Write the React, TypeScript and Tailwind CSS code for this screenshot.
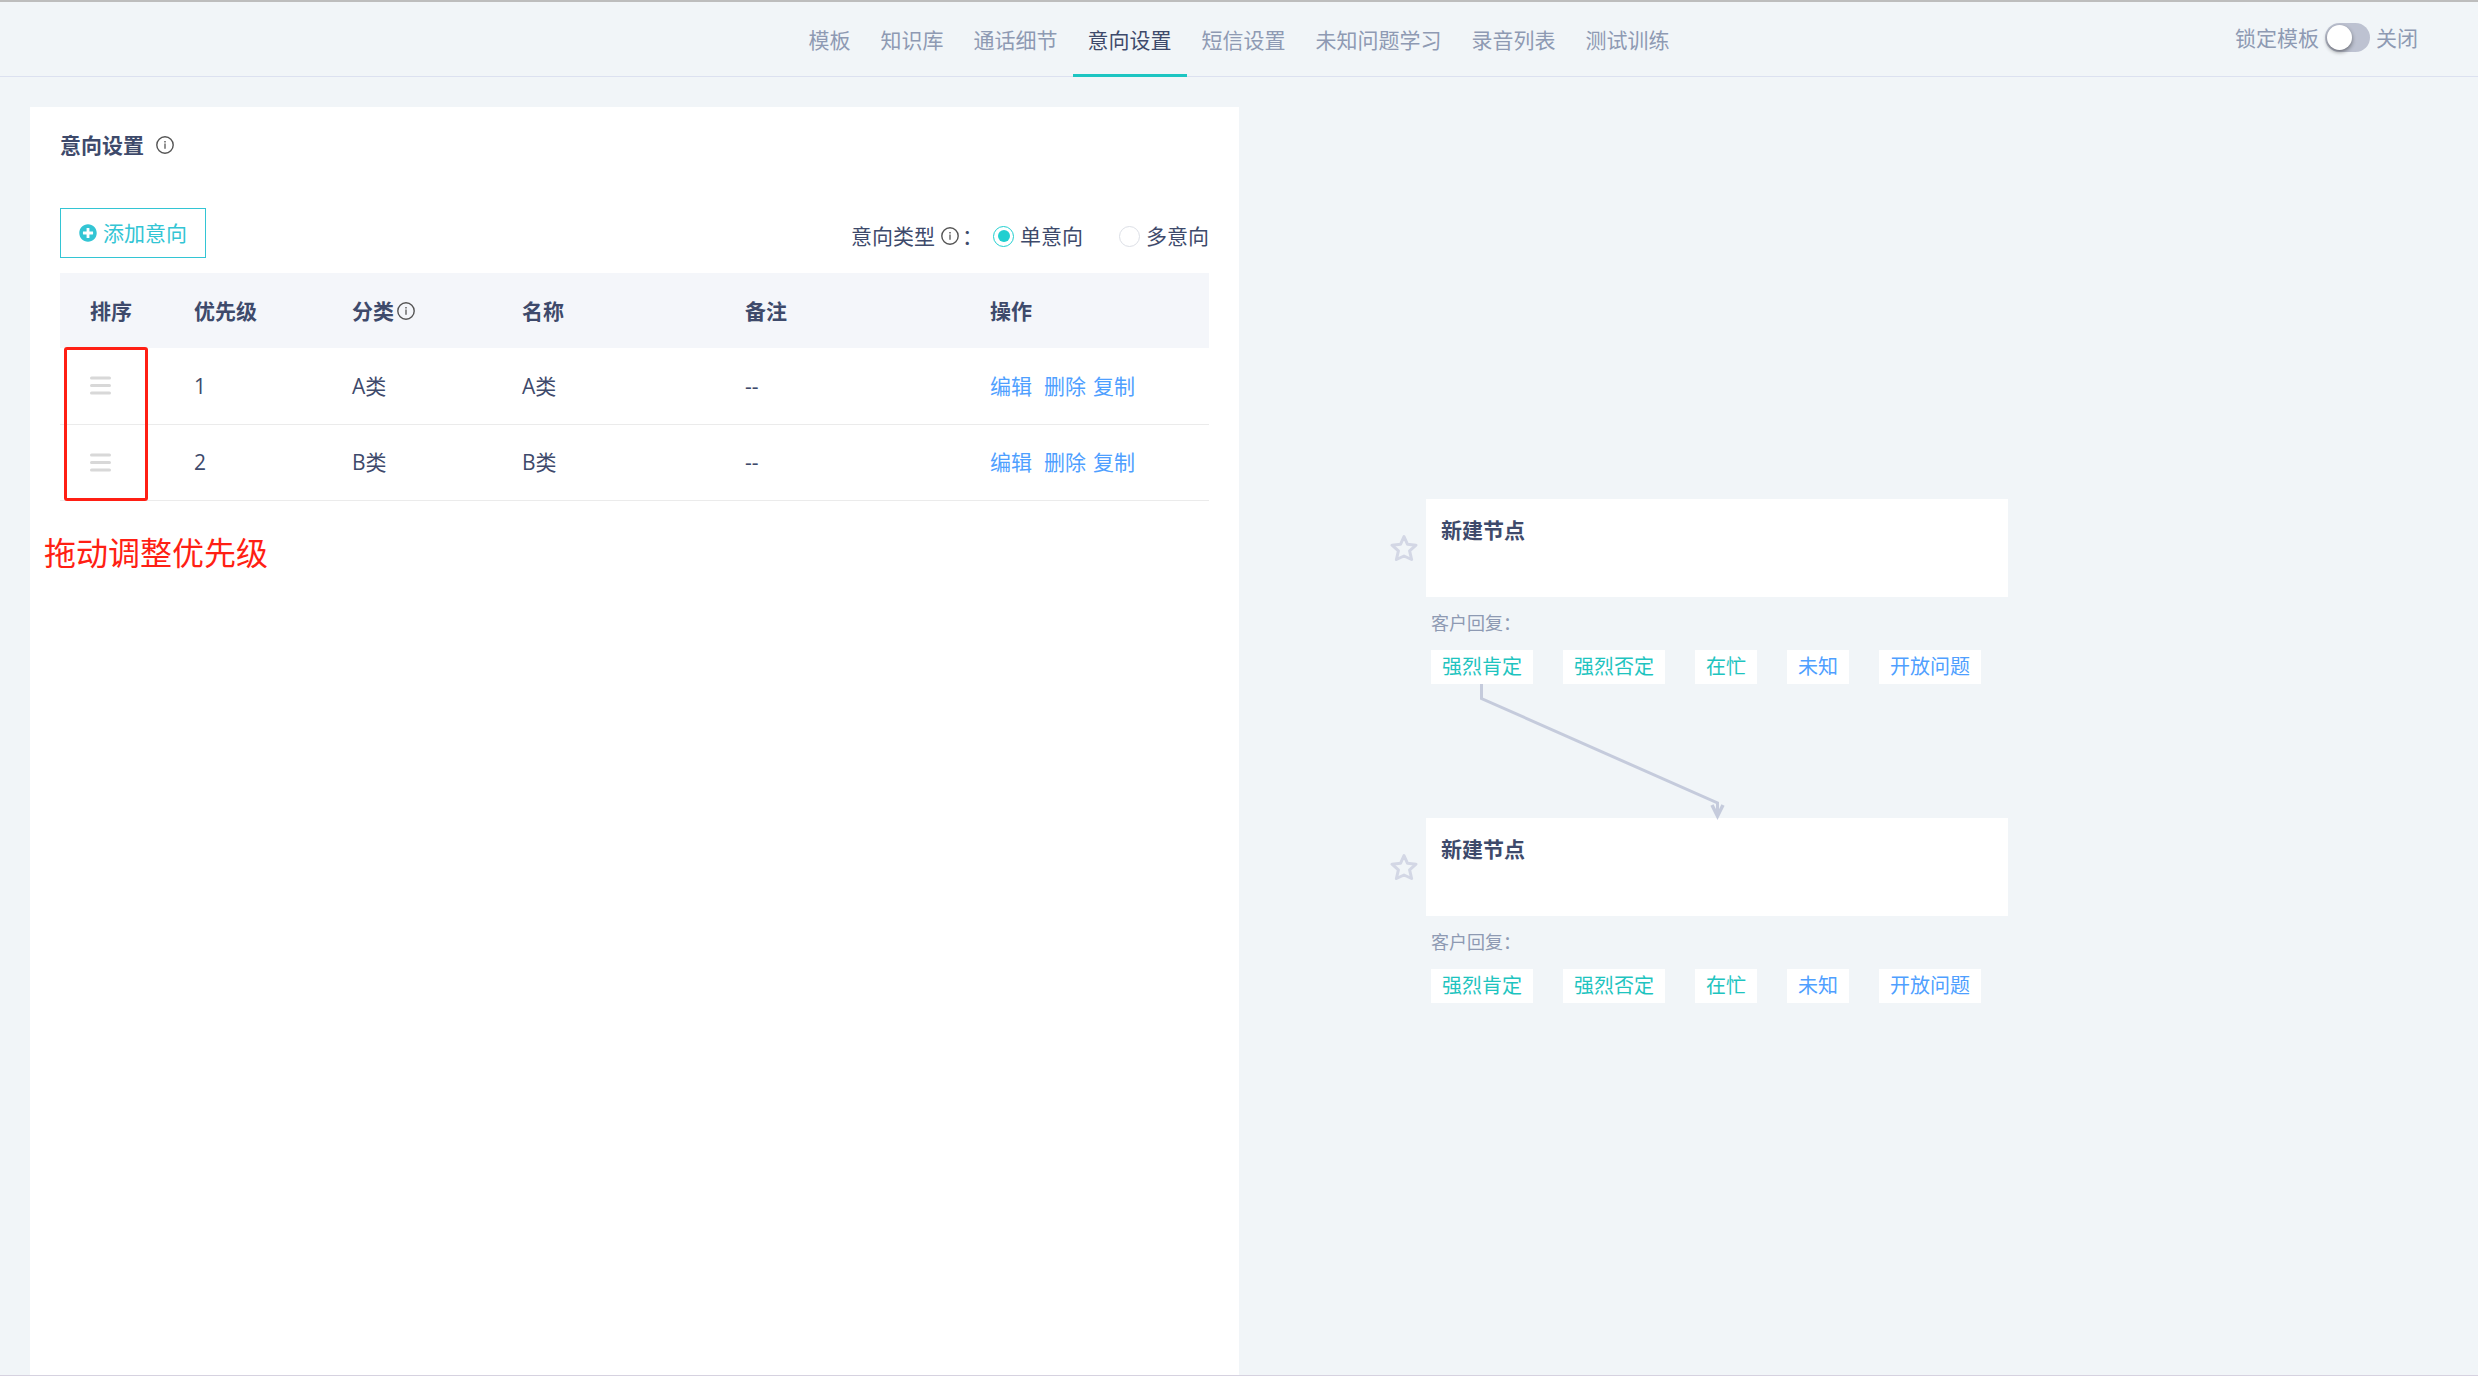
import { useState } from "react"
import { FaPlusCircle } from "react-icons/fa"

const tabs = ["模板", "知识库", "通话细节", "意向设置", "短信设置", "未知问题学习", "录音列表", "测试训练"]

const intents = [
  { priority: 1, category: "A类", name: "A类", remark: "--" },
  { priority: 2, category: "B类", name: "B类", remark: "--" },
]

const replies = [
  { label: "强烈肯定", color: "text-[#1ec4bf]" },
  { label: "强烈否定", color: "text-[#1ec4bf]" },
  { label: "在忙", color: "text-[#1ec4bf]" },
  { label: "未知", color: "text-[#4f9fff]" },
  { label: "开放问题", color: "text-[#4f9fff]" },
]

function InfoIcon() {
  return (
    <svg className="size-[18px] shrink-0" viewBox="0 0 18 18" fill="none" stroke="#555" aria-hidden="true">
      <circle cx="9" cy="9" r="8.2" strokeWidth="1.4" />
      <path d="M9 7.6v5.2" strokeWidth="1.3" />
      <path d="M9 5v1.4" strokeWidth="1.4" />
    </svg>
  )
}

function DragIcon() {
  return (
    <svg className="h-[21px] w-[21px]" viewBox="0 0 21 21" stroke="#d8d8d8" strokeWidth="3" strokeLinecap="round" aria-hidden="true">
      <path d="M1.5 3h18M1.5 10.5h18M1.5 18h18" />
    </svg>
  )
}

function StarIcon() {
  return (
    <svg className="size-7 shrink-0" viewBox="0 0 28 28" fill="none" stroke="#d3d7e5" strokeWidth="3" strokeLinejoin="round" aria-hidden="true">
      <path d="M14 2.500l3.500 7.800 8.500.9-6.400 5.700 2 8.600-7.600-3.500-7.600 3.500 2-8.600L2 11.200l8.500-.9z" />
    </svg>
  )
}

function Header() {
  const [active, setActive] = useState("意向设置")
  const [locked, setLocked] = useState(false)

  return (
    <header className="grid grid-cols-[1fr_auto_1fr] border-t-2 border-b border-t-[#bdbdbd] border-b-[#dce1f0]">
      <nav className="col-start-2 -mb-px flex">
        {tabs.map((tab) => (
          <button
            key={tab}
            onClick={() => setActive(tab)}
            className={
              tab === active
                ? "h-[75px] border-b-3 border-[#1cc5c2] px-[15px] pt-[3px] text-[#3e4a6b]"
                : "h-[75px] border-b-3 border-transparent px-[15px] pt-[3px] text-[#8e9ab3]"
            }
          >
            {tab}
          </button>
        ))}
      </nav>
      <label className="flex h-[74px] items-center justify-end gap-1.5 pr-[60px] pb-[3px] text-[#8e9ab3]">
        <span>锁定模板</span>
        <input
          type="checkbox"
          role="switch"
          checked={locked}
          onChange={(e) => setLocked(e.target.checked)}
          className="h-[29px] w-[45px] cursor-pointer appearance-none rounded-full bg-[#bdc2d1] p-0.5 before:block before:size-[25px] before:rounded-full before:bg-white before:shadow-[0_2px_4px_rgba(0,0,0,0.45)] checked:bg-[#1cc5c2] checked:before:ml-4"
        />
        <span>{locked ? "开启" : "关闭"}</span>
      </label>
    </header>
  )
}

function TypeRadio({ label, checked, onChange }: { label: string; checked: boolean; onChange: () => void }) {
  return (
    <label className="flex items-center gap-1.5">
      <input
        type="radio"
        name="intent-type"
        checked={checked}
        onChange={onChange}
        className="grid size-[21px] appearance-none place-items-center rounded-full border border-[#dcdfe6] bg-white checked:border-[#20cfd0] checked:before:size-3 checked:before:rounded-full checked:before:bg-[#20cfd0]"
      />
      {label}
    </label>
  )
}

function IntentTable() {
  return (
    <div className="relative mt-[15px]">
      <table className="w-full table-fixed text-left">
        <thead className="bg-[#f4f6fa]">
          <tr className="h-[75px]">
            <th className="w-[134px] pl-[30px]">排序</th>
            <th className="w-[158px]">优先级</th>
            <th className="w-[170px]">
              <span className="flex items-center gap-[3px]">
                分类
                <InfoIcon />
              </span>
            </th>
            <th className="w-[223px]">名称</th>
            <th className="w-[245px]">备注</th>
            <th>操作</th>
          </tr>
        </thead>
        <tbody>
          {intents.map((row) => (
            <tr key={row.priority} className="h-[76px] border-b border-[#ebebeb]">
              <td className="pl-[30px]">
                <button className="block cursor-move" aria-label="排序">
                  <DragIcon />
                </button>
              </td>
              <td>{row.priority}</td>
              <td>{row.category}</td>
              <td>{row.name}</td>
              <td>{row.remark}</td>
              <td>
                <div className="flex gap-[7px] text-[#4f9fff]">
                  <button className="mr-[5px]">编辑</button>
                  <button>删除</button>
                  <button>复制</button>
                </div>
              </td>
            </tr>
          ))}
        </tbody>
      </table>
      {/* highlight around the drag handles */}
      <div className="pointer-events-none absolute top-[74px] bottom-0 left-1 w-[84px] rounded-[3px] border-3 border-[#ff1f14]" />
    </div>
  )
}

function IntentPanel() {
  const [type, setType] = useState("single")

  return (
    <section className="w-1/2 pt-[30px] pl-[30px]">
      <div className="h-full bg-white px-[30px] pt-[22px]">
        <h1 className="flex items-center gap-3 font-bold">
          意向设置
          <InfoIcon />
        </h1>
        <div className="mt-[47px] flex items-center justify-between">
          <button className="flex h-[50px] items-center gap-1.5 border border-[#33c5d4] px-[18px] text-[#33c5d4]">
            <FaPlusCircle className="size-[18px]" />
            添加意向
          </button>
          <div className="flex items-center pt-1.5">
            <span className="mr-1.5">意向类型</span>
            <InfoIcon />
            <span className="mr-2.5 ml-[3px]">：</span>
            <div className="flex gap-9">
              <TypeRadio label="单意向" checked={type === "single"} onChange={() => setType("single")} />
              <TypeRadio label="多意向" checked={type === "multi"} onChange={() => setType("multi")} />
            </div>
          </div>
        </div>
        <IntentTable />
        <p className="-ml-4 mt-7 text-[32px] leading-12 text-[#ff1f14]">拖动调整优先级</p>
      </div>
    </section>
  )
}

function FlowNode() {
  return (
    <div>
      <div className="flex items-center gap-2">
        <StarIcon />
        <div className="h-[98px] w-[582px] bg-white px-[15px] pt-[15px] font-bold">新建节点</div>
      </div>
      <div className="pl-[41px]">
        <p className="mt-2.5 text-lg leading-8 text-[#8e9ab3]">客户回复：</p>
        <ul className="mt-[11px] flex gap-[30px] text-xl">
          {replies.map((reply) => (
            <li key={reply.label} className={reply.color}>
              <button className="block h-[34px] bg-white px-[11px]">{reply.label}</button>
            </li>
          ))}
        </ul>
      </div>
    </div>
  )
}

function FlowCanvas() {
  return (
    <section className="relative flex-1 overflow-hidden">
      <div className="absolute top-[422px] left-[151px]">
        <FlowNode />
      </div>
      <div className="absolute top-[741px] left-[151px]">
        <FlowNode />
      </div>
      <svg
        className="absolute top-[607px] left-[230px] h-[140px] w-[270px]"
        viewBox="0 0 270 140"
        fill="none"
        stroke="#c5cbdc"
        strokeWidth="3"
        aria-hidden="true"
      >
        <path d="M12.5 0v14.5l236 104.5v12" />
        <path d="M243 121l5.500 11 5.500-11" strokeWidth="3.500" />
      </svg>
    </section>
  )
}

export default function App() {
  return (
    <div className="flex min-h-screen flex-col border-b border-[#d6d2e0] bg-[#f1f5f8] font-['Open_Sans','Noto_Sans_CJK_SC',sans-serif] text-[21px] leading-8 text-[#3e4a6b]">
      <Header />
      <main className="flex flex-1">
        <IntentPanel />
        <FlowCanvas />
      </main>
    </div>
  )
}
